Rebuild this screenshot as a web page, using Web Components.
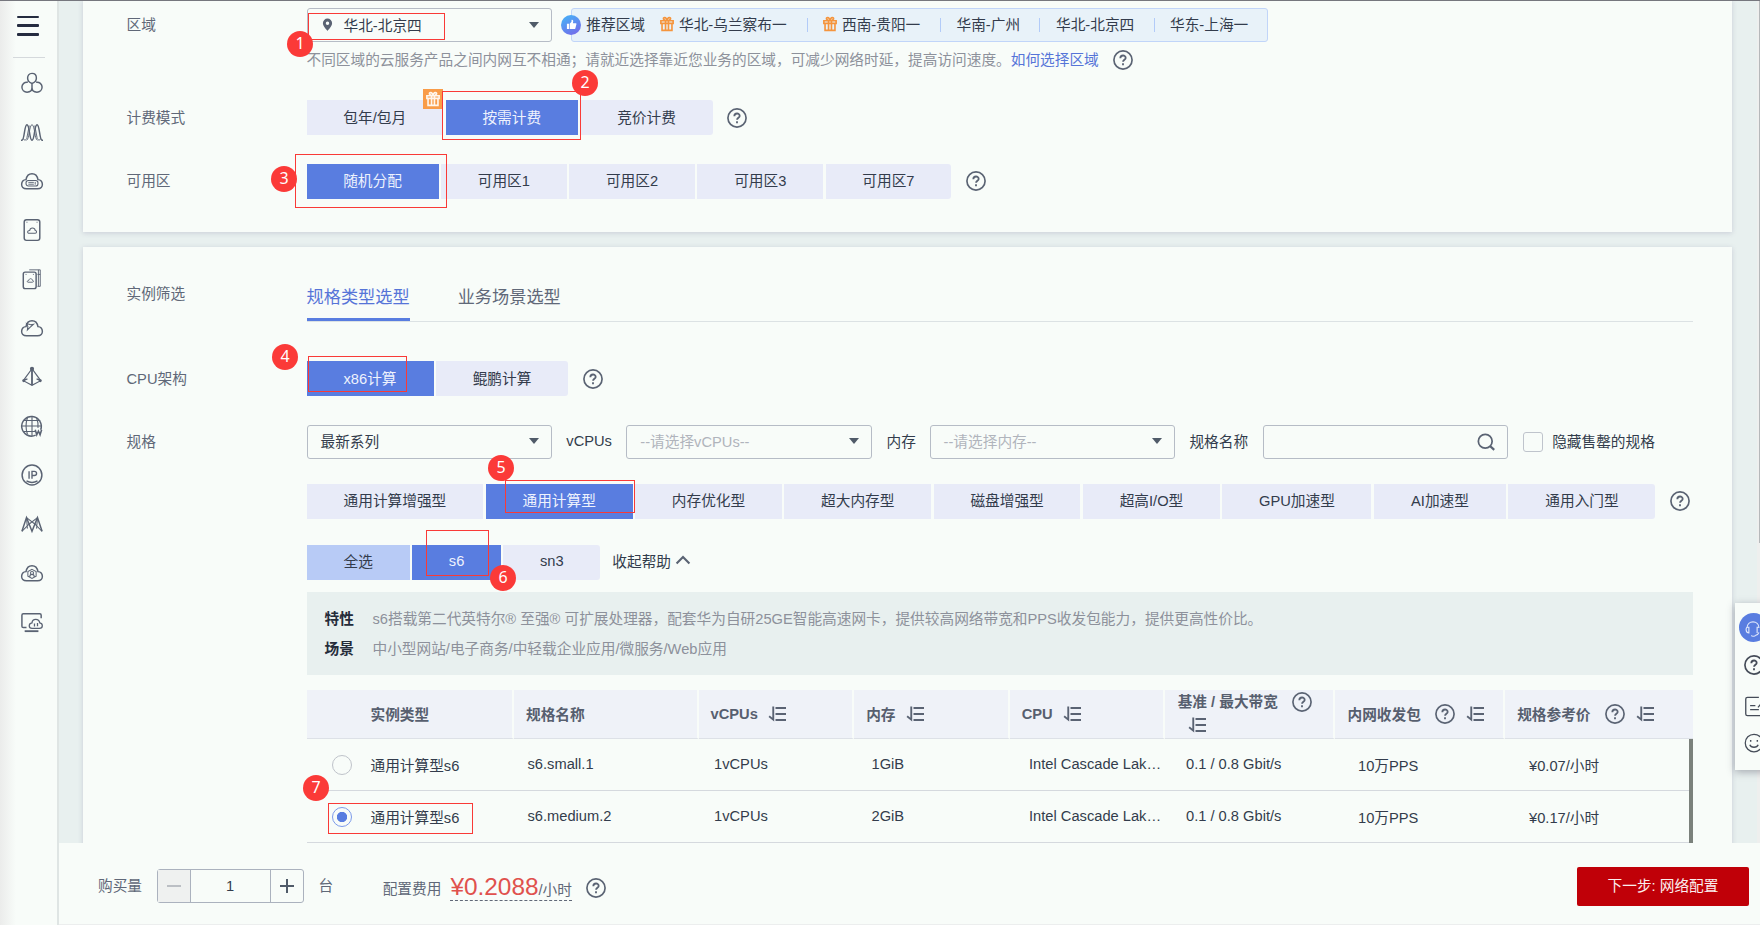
<!DOCTYPE html>
<html lang="zh-CN">
<head>
<meta charset="utf-8">
<title>购买弹性云服务器</title>
<style>
    html, body {
        margin: 0;
        height: 100%;
        overflow: hidden;
    }

    body {
        font-family: 'Liberation Sans', 'Noto Sans CJK SC', sans-serif;
        font-size: 14.68px;
        color: #333c4c;
        background: #e8f0ef;
    }
</style>
</head>
<body>
<ecs-page></ecs-page>

<script>
const ICONS = {
    help: '<circle cx="12" cy="12" r="10.9" stroke-width="2"/><path stroke-width="2.2" d="M8.8 9.800c0-4.200 6.400-4.200 6.400-.3 0 2.200-3.100 2.300-3.100 4.600M12 16v2.200"/>',
    sort: '<path stroke-width="2.500" d="M7 2v17.500L1.500 15M10 4h14M10 12h14M10 20h14"/>',
    search: '<circle cx="11" cy="11" r="9.200" stroke-width="2.300"/><path stroke-width="2.800" d="M17.500 17.500l5.500 5"/>',
    up: '<path stroke-width="3.600" d="M1 18L12 7l11 11"/>',
    pin: '<path fill="currentColor" stroke="none" fill-rule="evenodd" d="M12 1a8.500 8.500 0 0 0-8.500 8.500C3.500 15 12 23.500 12 23.500S20.500 15 20.500 9.500A8.500 8.500 0 0 0 12 1zm0 5.500a3.200 3.200 0 1 1 0 6.400 3.200 3.200 0 0 1 0-6.400z"/>',
    gift: '<path stroke-width="2.800" d="M1.500 6.500h21v4.500h-21zM3.500 11v12h17V11M9.500 6.500v16M14.500 6.500v16M12 6C5 6 4.500 1 8 1c2.500 0 4 3 4 5 0-2 1.500-5 4-5 3.500 0 3 5-4 5"/>',
    cubes: '<path d="M12 1.500c3.400 0 4.800 2.600 4.800 5.100S15 11.500 12 12.500C9 11.500 7.200 9.100 7.200 6.600S8.600 1.500 12 1.500zM7.500 11.200c-3.700-.6-6.500 2-6.500 5.200S3.500 22 6.600 22c2.900 0 5.400-1.600 5.400-5v-4.500M16.500 11.200c3.700-.6 6.500 2 6.500 5.200S20.500 22 17.400 22c-2.900 0-5.400-1.600-5.400-5"/>',
    waves: '<path d="M0 21h1C4 21 3.500 4 6.500 4S9 21 12 21s2.500-17 5.500-17S20 21 23 21h1"/><path stroke-width="1" d="M6 21C9 21 9 4 12 4s3 17 6 17M2.500 19c.5 2.500 3.500 2.500 4-1L9 5M21.500 19c-.5 2.500-3.500 2.500-4-1L15 5"/>',
    server: '<path d="M6 20.500h12c7.500 0 6.500-9.500.5-10C17 2 7 2 5.500 10.500c-6 .5-7 10 .5 10z"/><rect x="5.500" y="11.500" width="13" height="6" rx="2.500" stroke-width="1.200"/><path stroke-width="1" d="M8 13.500h6M8 15.500h6M15.500 13v3"/>',
    disk: '<rect x="3.500" y=".8" width="17" height="22.500" rx="2.500"/><path stroke-width="1.100" d="M9 15.500h6.500c2 0 2-3 0-3-.5-3.500-5.500-3.500-6 0-3 0-3 3-.5 3zM6 3.500h1M17 3.500h1"/>',
    disks: '<rect x="2.500" y="4.500" width="14" height="18" rx="2"/><path stroke-width="1" d="M9 2h12v18h-3M19 2v18M7.500 15.500h5c1.500 0 1.500-2 0-2-.5-2.500-3.500-2.500-4 0-2 0-2 2-1 2zM5 7h1M13 7h1M21 7h-3"/>',
    cloud: '<path d="M6 20.500h12c7.500 0 6.500-9.500.5-10C17 2 7 2 5.500 10.500c-6 .5-7 10 .5 10z"/><path stroke-width="1.200" d="M6 7l4.500 1.500 3-.5-4 3.500L7 14l.5-3.500z"/>',
    pyramid: '<path stroke-width="1.300" d="M12 3L2.500 16 12 21l9.500-5L12 3zM2.500 16L7 14M21.500 16L17 14"/><path stroke-width="2" d="M12 3v18"/><circle cx="12" cy="3" r="1.500" fill="currentColor"/><circle cx="3" cy="16" r=".8" fill="currentColor"/><circle cx="21" cy="16" r=".8" fill="currentColor"/>',
    globe: '<path d="M21.500 16A10.700 10.700 0 1 0 16 22"/><path stroke-width="1.200" d="M12 1v22M1 12h22M3 6h18M3 18h13M7 3c-2 6-2 12 0 18M17 3c1.500 4 2 7 1.500 11"/><path stroke-width="1.700" d="M15.500 16l1.700 5.500 1.800-4 1.800 4 1.700-5.500"/>',
    ip: '<circle cx="12" cy="12" r="10.800"/><path stroke-width="1.500" d="M8.800 8v8M12 16V8h2.500c3.300 0 3.300 4.500 0 4.500H12M6 18.500c4 2.200 8 2.200 12 0"/>',
    mesh: '<path d="M1 20L6 5l6 15 6-15 5 15"/><path stroke-width="1.100" d="M6 5l9 7 8 8M18 5l-9 7-8 8M6 5l1 12M18 5l-1 12"/>',
    user: '<path d="M6 20.500h12c7.500 0 6.500-9.500.5-10C17 2 7 2 5.500 10.500c-6 .5-7 10 .5 10z"/><path stroke-width="1.100" d="M12 8l4.500 2.500v5L12 18l-4.500-2.500v-5zM9.500 16.500c0-4 5-4 5 0"/><circle cx="12" cy="12" r="1.700" stroke-width="1.100"/>',
    screen: '<path d="M6 18H2.500c-1 0-1.500-.5-1.500-1.500v-12C1 3.500 1.500 3 2.500 3h18c1 0 1.500.5 1.500 1.500V8"/><path d="M4 22h15" stroke-width="2"/><path stroke-width="1.400" d="M12 19h8c4.500 0 4-5.500.5-6-1-5-8-5-8.500 0-4 .5-4 6 0 6zM14.700 13.500v3.500M18 13v3.500"/>',
    thumb: '<path fill="#fff" stroke="none" d="M2 10.500h4.500V22H2zM8 10.500l4-4.500V2c2.500-1 4 1 3.700 3.500L15 9h6c1.500 0 2 1 1.700 2.300L20.500 20c-.3 1.300-1 2-2.300 2H8z"/>',
    headset: '<path stroke-width="1.500" d="M4 12C4 1 20 1 20 12M4 11h2.500v7.500C2 18.500 2 11 4.500 11M20 11h-2.500v7.500M20 18c-1 2.500-3 3.500-5 4M10 21.500c0 2 5 2 5 0"/>',
    edit: '<path stroke-width="1.500" d="M17 1.500H4C2.500 1.500 2 2 2 3.500v17C2 22 2.500 22.500 4 22.500h16c1.500 0 2-.5 2-2V13M23 5l-7 8M7 11h6M7 15.500h10"/>',
    smile: '<circle cx="12" cy="12" r="10.500" stroke-width="1.500"/><path stroke-width="1.700" d="M7 14c1.500 4 8.500 4 10 0M8 8.500v2M16 8.500v2"/>'
};

class UiIcon extends HTMLElement {
    connectedCallback() {
        const size = this.getAttribute('size') || 22;
        this.attachShadow({mode: 'open'}).innerHTML = `
            <style>
                :host { display: inline-flex; flex: none; width: ${size}px; height: ${size}px; color: #5a6373; }
                svg { width: 100%; height: 100%; overflow: visible; fill: none; stroke: currentColor; stroke-width: 1.6; }
            </style>
            <svg viewBox="0 0 24 24">${ICONS[this.getAttribute('name')]}</svg>
        `;
    }
}
customElements.define('ui-icon', UiIcon);

class SideMenu extends HTMLElement {
    connectedCallback() {
        const names = ['cubes', 'waves', 'server', 'disk', 'disks', 'cloud', 'pyramid', 'globe', 'ip', 'mesh', 'user', 'screen'];
        this.attachShadow({mode: 'open'}).innerHTML = `
            <style>
                :host {
                    display: flex;
                    flex-direction: column;
                    box-sizing: border-box;
                    width: 59px;
                    padding-top: 15.500px;
                    border-right: 2px solid #dfe5e4;
                    background: linear-gradient(90deg, #ebeceb, #f8fcf9 16px);
                }
                .burger { display: flex; flex-direction: column; gap: 6.300px; margin-left: 17px; width: 22px; }
                .burger i { height: 2.500px; border-radius: 1px; background: #252c40; }
                hr { width: 32px; height: 1px; margin: 21px 0 0 12.500px; border: 0; background: #d5d9dc; }
                nav { display: flex; flex-direction: column; gap: 27px; margin: 14px 0 0 21px; }
            </style>
            <div class="burger"><i></i><i></i><i></i></div>
            <hr>
            <nav>${names.map(n => `<ui-icon name="${n}"></ui-icon>`).join('')}</nav>
        `;
    }
}
customElements.define('side-menu', SideMenu);

class FormRow extends HTMLElement {
    connectedCallback() {
        this.attachShadow({mode: 'open'}).innerHTML = `
            <style>
                :host { display: flex; align-items: center; height: 35px; }
                .label { flex: none; width: 180px; padding-bottom: 2.500px; color: #606878; }
                .content { display: flex; align-items: center; flex: 1; height: 100%; white-space: nowrap; }
                ::slotted(span) { padding-bottom: 2px; }
            </style>
            <div class="label">${this.getAttribute('label') || ''}</div>
            <div class="content"><slot></slot></div>
        `;
    }
}
customElements.define('form-row', FormRow);

// options="text:width|text:width", active is the index of the selected one
class OptionGroup extends HTMLElement {
    connectedCallback() {
        const active = Number(this.getAttribute('active'));
        const all = this.hasAttribute('all');
        const options = this.getAttribute('options').split('|').map((option, index) => {
            const [text, width] = option.split(':');
            const cls = index === active ? 'on' : (all && index === 0 ? 'all' : '');
            return `<div class="option ${cls}" style="width:${width}px">${text}</div>`;
        }).join('');
        this.attachShadow({mode: 'open'}).innerHTML = `
            <style>
                :host { display: flex; gap: 2.500px; height: 35px; }
                .option {
                    display: flex;
                    align-items: center;
                    justify-content: center;
                    box-sizing: border-box;
                    padding-bottom: 3px;
                    background: #e8ebf8;
                }
                .option:first-child { border-radius: 3px 0 0 3px; }
                .option:last-child { border-radius: 0 3px 3px 0; }
                .on { background: #597de0; color: #eef2fd; }
                .all { background: #b8cbf6; }
            </style>
            ${options}
        `;
    }
}
customElements.define('option-group', OptionGroup);

class SelectBox extends HTMLElement {
    connectedCallback() {
        const hint = this.hasAttribute('placeholder');
        this.attachShadow({mode: 'open'}).innerHTML = `
            <style>
                :host {
                    display: flex;
                    align-items: center;
                    box-sizing: border-box;
                    width: 245.300px;
                    height: 34px;
                    padding: 0 12px 1px 13px;
                    border: 1.500px solid #b6bcc6;
                    border-radius: 3px;
                    color: ${hint ? '#b0b4bc' : '#333c4c'};
                }
                .value { display: flex; align-items: center; flex: 1; padding-bottom: var(--lift, 2px); }
                .arrow { border: 5px solid transparent; border-top: 6px solid #505b69; border-bottom: 0; }
            </style>
            <div class="value"><slot></slot></div>
            <div class="arrow"></div>
        `;
    }
}
customElements.define('select-box', SelectBox);

class RegionTips extends HTMLElement {
    connectedCallback() {
        this.attachShadow({mode: 'open'}).innerHTML = `
            <style>
                :host {
                    display: flex;
                    align-items: center;
                    box-sizing: border-box;
                    width: 697px;
                    height: 34px;
                    margin-left: 19.500px;
                    padding-bottom: 1px;
                    border: 1.500px solid #c1d5f9;
                    border-radius: 3px;
                    background: #e8f2f9;
                }
                .thumb {
                    display: flex;
                    align-items: center;
                    justify-content: center;
                    width: 20px;
                    height: 20px;
                    margin: 0 5px 0 -11px;
                    border-radius: 50%;
                    background: linear-gradient(150deg, #4da7f5 20%, #7a63e8);
                }
                .gift { color: #f5953d; margin: 0 4.500px 2px 15.500px; }
                i { width: 1px; height: 14px; background: #b2cbf8; }
                span { white-space: nowrap; padding-bottom: 2px; }
            </style>
            <div class="thumb"><ui-icon name="thumb" size="11"></ui-icon></div>
            <span>推荐区域</span>
            <ui-icon class="gift" name="gift" size="14"></ui-icon>
            <span style="width:128px">华北-乌兰察布一</span><i></i>
            <ui-icon class="gift" name="gift" size="14"></ui-icon>
            <span style="width:98.500px">西南-贵阳一</span><i></i>
            <span style="margin-left:15px;width:82.500px">华南-广州</span><i></i>
            <span style="margin-left:16px;width:98px">华北-北京四</span><i></i>
            <span style="margin-left:15px">华东-上海一</span>
        `;
    }
}
customElements.define('region-tips', RegionTips);

class SpecTable extends HTMLElement {
    connectedCallback() {
        const sort = '<ui-icon name="sort" size="18"></ui-icon>';
        const help = '<ui-icon name="help" size="20"></ui-icon>';
        const rows = [
            ['通用计算型s6', 's6.small.1', '1vCPUs', '1GiB', 'Intel Cascade Lak…', '0.1 / 0.8 Gbit/s', '10万PPS', '¥0.07/小时'],
            ['通用计算型s6', 's6.medium.2', '1vCPUs', '2GiB', 'Intel Cascade Lak…', '0.1 / 0.8 Gbit/s', '10万PPS', '¥0.17/小时']
        ].map((row, index) => `
            <div class="row">
                <div class="radio ${index === 1 ? 'checked' : ''}"></div>
                ${row.map(cell => `<span>${cell}</span>`).join('')}
            </div>
        `).join('');

        this.attachShadow({mode: 'open'}).innerHTML = `
            <style>
                :host { display: block; margin-top: 15px; white-space: nowrap; }
                .head {
                    display: grid;
                    grid-template-columns: 207.500px 184.500px 155.700px 155.500px 155.500px 170.300px 169.700px 1fr;
                    height: 49px;
                    font-weight: bold;
                    color: #575f6f;
                }
                .head > div {
                    display: flex;
                    align-items: center;
                    box-sizing: border-box;
                    padding: 0 0 1px 12px;
                    border-right: 2px solid #f8fcf9;
                    border-bottom: 1.500px solid #dde1e7;
                    background: #eff2f8;
                }
                .head > div:first-child { padding-left: 64px; }
                .head > div:last-child { border-right: 0; }
                .head ui-icon { margin-left: 10.500px; }
                .head ui-icon[name=help] { margin: 0 0 0 14.500px; }
                .head .two { flex-wrap: wrap; align-content: center; padding: 0 0 4px 12.500px; }
                .two span { line-height: 24px; }
                .two ui-icon[name=sort] { margin: 2px 60px 0 10px; }
                .body { display: flex; }
                .rows { flex: 1; }
                .row {
                    display: grid;
                    grid-template-columns: 64px 157px 186.500px 157.500px 157.500px 157px 172px 171px 1fr;
                    align-items: center;
                    box-sizing: border-box;
                    height: 52.200px;
                    border-bottom: 1.500px solid #d5d9de;
                }
                .row span { padding-bottom: 1px; }
                .radio {
                    box-sizing: border-box;
                    width: 20px;
                    height: 20px;
                    margin-left: 25px;
                    border: 1.500px solid #bfc3ca;
                    border-radius: 50%;
                }
                .checked { border-color: #7c9aea; background: radial-gradient(circle, #597de0 4.800px, transparent 5.500px); }
                .bar { width: 4px; background: #7b817c; }
            </style>
            <div class="head">
                <div>实例类型</div>
                <div>规格名称</div>
                <div>vCPUs${sort}</div>
                <div>内存${sort}</div>
                <div>CPU${sort}</div>
                <div class="two"><span>基准 / 最大带宽</span>${help}${sort}</div>
                <div>内网收发包${help}${sort}</div>
                <div>规格参考价${help}${sort}</div>
            </div>
            <div class="body">
                <div class="rows">${rows}</div>
                <div class="bar"></div>
            </div>
        `;
    }
}
customElements.define('spec-table', SpecTable);

class FooterBar extends HTMLElement {
    connectedCallback() {
        this.attachShadow({mode: 'open'}).innerHTML = `
            <style>
                :host {
                    display: flex;
                    align-items: center;
                    box-sizing: border-box;
                    height: 82px;
                    padding: 5px 11px 0 39px;
                    background: #f8fcf9;
                    border-bottom: 1px solid #eceeee;
                    color: #606878;
                    white-space: nowrap;
                }
                .text { padding-bottom: 3px; }
                .stepper {
                    display: grid;
                    grid-template-columns: 32px 1fr 32px;
                    box-sizing: border-box;
                    width: 147px;
                    height: 34px;
                    margin: 0 15px 0 14.500px;
                    border: 1.500px solid #abb2be;
                    border-radius: 3px;
                    color: #333c4c;
                }
                .stepper > * { display: flex; align-items: center; justify-content: center; }
                .stepper svg { width: 14px; stroke: #505b69; stroke-width: 2; }
                .minus { background: #eff1f0; }
                .minus svg { stroke: #bbbfc4; }
                .num { border: solid #abb2be; border-width: 0 1px; }
                .fee { margin: 2px 9px 0 49.500px; }
                .price {
                    display: flex;
                    align-items: baseline;
                    margin: 6px 14px 0 0;
                    border-bottom: 1.500px dashed #606878;
                    line-height: 19.500px;
                }
                b { font-weight: normal; font-size: 24.400px; color: #e0514d; }
                .help { margin-top: 4px; }
                button {
                    width: 172px;
                    height: 39px;
                    margin-left: auto;
                    padding: 0 0 3px;
                    border: 0;
                    border-radius: 2px;
                    background: #c00008;
                    color: #fbeeee;
                    font: inherit;
                }
            </style>
            <span class="text">购买量</span>
            <div class="stepper">
                <div class="minus"><svg viewBox="0 0 14 14"><path d="M0 7h14"/></svg></div>
                <div class="num">1</div>
                <div><svg viewBox="0 0 14 14"><path d="M0 7h14M7 0v14"/></svg></div>
            </div>
            <span class="text">台</span>
            <span class="fee">配置费用</span>
            <span class="price"><b>¥0.2088</b>/小时</span>
            <ui-icon class="help" name="help" size="20"></ui-icon>
            <button>下一步: 网络配置</button>
        `;
    }
}
customElements.define('footer-bar', FooterBar);

class FloatPanel extends HTMLElement {
    connectedCallback() {
        this.attachShadow({mode: 'open'}).innerHTML = `
            <style>
                :host {
                    position: absolute;
                    left: 1735px;
                    top: 603px;
                    display: flex;
                    flex-direction: column;
                    align-items: flex-start;
                    box-sizing: border-box;
                    width: 60px;
                    height: 167px;
                    padding: 10px 0 0 4px;
                    background: #f8fcf9;
                    box-shadow: 0 2px 8px rgba(60, 60, 80, .4);
                }
                .service {
                    display: flex;
                    align-items: center;
                    justify-content: center;
                    width: 29px;
                    height: 29px;
                    border-radius: 50%;
                    background: #597de0;
                }
                .service ui-icon { color: #dfe7fb; margin-right: 1px; }
                ui-icon { color: #454c58; }
            </style>
            <div class="service"><ui-icon name="headset" size="18"></ui-icon></div>
            <ui-icon name="help" size="20" style="margin:13px 0 0 5px"></ui-icon>
            <ui-icon name="edit" size="21" style="margin:21px 0 0 5px"></ui-icon>
            <ui-icon name="smile" size="20" style="margin:16px 0 0 5px"></ui-icon>
        `;
    }
}
customElements.define('float-panel', FloatPanel);

// numbered step: frame="x,y,w,h" and dot="cx,cy"
class StepMark extends HTMLElement {
    connectedCallback() {
        const [x, y, w, h] = this.getAttribute('frame').split(',');
        const [cx, cy] = this.getAttribute('dot').split(',');
        this.attachShadow({mode: 'open'}).innerHTML = `
            <style>
                :host { display: block; }
                .frame {
                    position: absolute;
                    box-sizing: border-box;
                    left: ${x}px;
                    top: ${y}px;
                    width: ${w}px;
                    height: ${h}px;
                    border: 1px solid #f93a37;
                }
                .dot {
                    position: absolute;
                    left: ${cx - 13}px;
                    top: ${cy - 13}px;
                    width: 26px;
                    height: 26px;
                    border-radius: 50%;
                    background: #fb3a38;
                    color: #fff;
                    font: 16px/24px 'Noto Sans', sans-serif;
                    text-align: center;
                }
            </style>
            <div class="frame"></div>
            <div class="dot"><slot></slot></div>
        `;
    }
}
customElements.define('step-mark', StepMark);

class EcsPage extends HTMLElement {
    connectedCallback() {
        this.attachShadow({mode: 'open'}).innerHTML = `
            <style>
                :host { display: flex; position: relative; width: 1760px; height: 925px; overflow: hidden; }
                .main { display: flex; flex-direction: column; flex: 1; min-width: 0; }
                .scroll { flex: 1; min-height: 0; overflow: hidden; padding: 0 28.500px 0 24px; }
                .card {
                    box-sizing: border-box;
                    background: #f8fcf9;
                    padding: 0 38.500px 0 43.500px;
                    box-shadow: 0 1px 5px rgba(90, 80, 130, .22);
                }
                .first { height: 232px; padding-top: 7.500px; }
                .second { height: 620px; margin-top: 15px; padding-top: 29px; }
                .hint { height: 37px; margin-top: -1.500px; color: #8d919b; }
                .link { color: #5674d8; }
                .tip { margin-left: 14.500px; }
                .gift-tag {
                    position: absolute;
                    left: 423px;
                    top: 89px;
                    display: flex;
                    align-items: center;
                    justify-content: center;
                    width: 20px;
                    height: 20px;
                    background: #f99c48;
                }
                .gift-tag ui-icon { color: #fff6ec; }
                .tabs {
                    display: flex;
                    flex: 1;
                    gap: 48px;
                    box-sizing: border-box;
                    height: 51px;
                    margin-top: 5px;
                    border-bottom: 1.500px solid #dce2e4;
                    font-size: 17.200px;
                    color: #606878;
                }
                .tabs div { display: flex; align-items: center; box-sizing: border-box; height: 50px; padding-bottom: 1px; }
                .tabs .current { color: #5674d8; border-bottom: 3px solid #597de0; padding: 2px 0 0; }
                .search {
                    display: flex;
                    align-items: center;
                    justify-content: flex-end;
                    box-sizing: border-box;
                    width: 245.300px;
                    height: 34px;
                    padding-right: 12px;
                    border: 1.500px solid #b6bcc6;
                    border-radius: 3px;
                }
                .check { box-sizing: border-box; width: 20.500px; height: 20.500px; margin: 1px 9px 0 14.500px; border: 1.500px solid #bfc4cc; border-radius: 3px; }
                .about {
                    box-sizing: border-box;
                    height: 83px;
                    margin-top: 12.500px;
                    padding: 12px 18px;
                    line-height: 30px;
                    background: #e8f0ef;
                    color: #8d919b;
                }
                .about b { display: inline-block; width: 48px; color: #252c3a; }
                .specs { margin-left: 180px; }
                .topline { position: absolute; left: 0; top: 0; width: 100%; height: 1px; background: #76777e; }
                .track { position: absolute; right: 0; top: 1px; width: 3px; height: 842px; background: #eeefee; }
                .thumb { position: absolute; right: 0; top: 1px; width: 1.500px; height: 542px; background: #b5b8ba; }
            </style>
            <side-menu></side-menu>
            <div class="main">
                <div class="scroll">
                    <section class="card first">
                        <form-row label="区域">
                            <select-box style="--lift:0"><ui-icon name="pin" size="13" style="margin-right:10px"></ui-icon>华北-北京四</select-box>
                            <region-tips></region-tips>
                        </form-row>
                        <form-row class="hint">
                            <span>不同区域的云服务产品之间内网互不相通；请就近选择靠近您业务的区域，可减少网络时延，提高访问速度。</span>
                            <span class="link">如何选择区域</span>
                            <ui-icon class="tip" name="help" size="20"></ui-icon>
                        </form-row>
                        <form-row label="计费模式" style="margin-top:22px">
                            <option-group options="包年/包月:136.500|按需计费:132.500|竞价计费:132" active="1"></option-group>
                            <ui-icon class="tip" name="help" size="20"></ui-icon>
                        </form-row>
                        <form-row label="可用区" style="margin-top:28.500px">
                            <option-group options="随机分配:132|可用区1:125.700|可用区2:125.700|可用区3:125.700|可用区7:125.700" active="0"></option-group>
                            <ui-icon class="tip" name="help" size="20"></ui-icon>
                        </form-row>
                    </section>

                    <section class="card second">
                        <form-row label="实例筛选">
                            <div class="tabs"><div class="current">规格类型选型</div><div>业务场景选型</div></div>
                        </form-row>
                        <form-row label="CPU架构" style="margin-top:50px">
                            <option-group options="x86计算:127|鲲鹏计算:132" active="0"></option-group>
                            <ui-icon class="tip" name="help" size="20"></ui-icon>
                        </form-row>
                        <form-row label="规格" style="margin-top:28px">
                            <select-box>最新系列</select-box>
                            <span style="width:60px;margin-left:14.500px;padding-bottom:1px">vCPUs</span>
                            <select-box placeholder>--请选择vCPUs--</select-box>
                            <span style="width:43px;margin-left:15px">内存</span>
                            <select-box placeholder>--请选择内存--</select-box>
                            <span style="width:73.500px;margin-left:14.500px">规格名称</span>
                            <div class="search"><ui-icon name="search" size="18"></ui-icon></div>
                            <div class="check"></div>
                            <span>隐藏售罄的规格</span>
                        </form-row>
                        <div class="specs">
                            <form-row style="margin:24.500px 0 0 -180px">
                                <option-group options="通用计算增强型:176.800|通用计算型:146.800|内存优化型:146.800|超大内存型:146.800|磁盘增强型:146.800|超高I/O型:137|GPU加速型:149|AI加速型:132|通用入门型:147" active="1"></option-group>
                                <ui-icon class="tip" name="help" size="20"></ui-icon>
                            </form-row>
                            <form-row style="margin:26px 0 0 -180px">
                                <option-group all options="全选:103.300|s6:88.500|sn3:97" active="1"></option-group>
                                <span style="margin:0 5px 2px 12px">收起帮助</span>
                                <ui-icon name="up" size="14" style="margin-bottom:5px"></ui-icon>
                            </form-row>
                            <div class="about">
                                <div><b>特性</b>s6搭载第二代英特尔® 至强® 可扩展处理器，配套华为自研25GE智能高速网卡，提供较高网络带宽和PPS收发包能力，提供更高性价比。</div>
                                <div><b>场景</b>中小型网站/电子商务/中轻载企业应用/微服务/Web应用</div>
                            </div>
                            <spec-table></spec-table>
                        </div>
                    </section>
                </div>
                <footer-bar></footer-bar>
            </div>
            <div class="gift-tag"><ui-icon name="gift" size="14"></ui-icon></div>
            <div class="track"></div>
            <div class="thumb"></div>
            <float-panel></float-panel>
            <div class="topline"></div>
            <step-mark frame="308,13,137,27" dot="300,44">1</step-mark>
            <step-mark frame="442,91,139,49" dot="585,83">2</step-mark>
            <step-mark frame="295,154,152,54" dot="284,179">3</step-mark>
            <step-mark frame="308,356,99,36" dot="285,357">4</step-mark>
            <step-mark frame="505,480,130,33" dot="501,468">5</step-mark>
            <step-mark frame="426,530,63,46" dot="503,578">6</step-mark>
            <step-mark frame="328,803,145,31" dot="316,788">7</step-mark>
        `;
    }
}
customElements.define('ecs-page', EcsPage);
</script>
</body>
</html>
